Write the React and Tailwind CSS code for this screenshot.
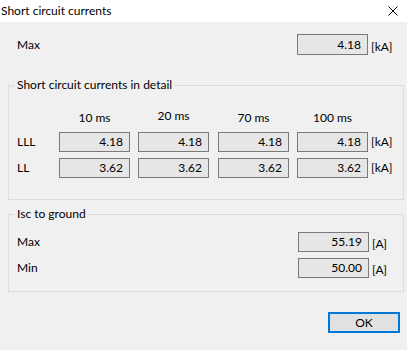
import React from "react";

const font = { fontFamily: 'Lato, "Noto Sans", sans-serif' };

const ValueBox = ({ value, className = "" }) => (
  <div
    className={`w-[71px] h-[20px] shrink-0 border border-[#7a7a7a] bg-[#e6e6e6] flex items-center justify-end pr-[6px] text-[12px] leading-none ${className}`}
  >
    {value}
  </div>
);

const Unit = ({ text }) => (
  <span className="pl-[3px] text-[12px] leading-none">{text}</span>
);

const Group = ({ title, className = "", children }) => (
  <div className={`ml-[8px] w-[396px] border border-[#dcdcdc] ${className}`}>
    <div className="-mt-[9px] h-[16px] flex">
      <span className="ml-[6px] px-[2px] bg-[#f0f0f0] text-[12px] leading-[16px]">{title}</span>
    </div>
    {children}
  </div>
);

const headers = ["10 ms", "20 ms", "70 ms", "100 ms"];

const rows = [
  { label: "LLL", values: ["4.18", "4.18", "4.18", "4.18"] },
  { label: "LL", values: ["3.62", "3.62", "3.62", "3.62"] },
];

const colGap = ["", "ml-[8px]", "ml-[9px]", "ml-[8px]"];

export default function App() {
  return (
    <div className="w-[407px] h-[350px] bg-[#f0f0f0] text-black overflow-hidden" style={font}>
      {/* title bar */}
      <div className="h-[22px] bg-white flex items-center justify-between">
        <span className="pl-[1px] text-[12px] leading-none">Short circuit currents</span>
        <svg className="mr-[9px]" width="10" height="10" viewBox="0 0 10 10">
          <path d="M0.5 0.5 L9.5 9.5 M9.5 0.5 L0.5 9.5" stroke="#000" strokeWidth="1" />
        </svg>
      </div>

      {/* max */}
      <div className="mt-[12px] h-[21px] flex items-center pl-[17px]">
        <span className="flex-1 text-[12px] leading-none">Max</span>
        <ValueBox value="4.18" className="h-[21px]" />
        <div className="w-[39px]">
          <Unit text="[kA]" />
        </div>
      </div>

      {/* detail group */}
      <Group title="Short circuit currents in detail" className="mt-[30px] h-[115px]">
        <div className="flex pl-[50px] mt-[17px] h-[16px]">
          {headers.map((h, i) => (
            <div
              key={h}
              className={`w-[71px] text-center text-[12px] leading-[16px] ${colGap[i]} ${i === 1 ? "-mt-[2px]" : ""}`}
            >
              {h}
            </div>
          ))}
        </div>
        <div className="flex flex-col gap-[6px] mt-[6px]">
          {rows.map((r) => (
            <div key={r.label} className="flex items-center pl-[8px] h-[20px]">
              <span className="w-[42px] text-[12px] leading-none">{r.label}</span>
              {r.values.map((v, i) => (
                <ValueBox key={i} value={v} className={colGap[i]} />
              ))}
              <Unit text="[kA]" />
            </div>
          ))}
        </div>
      </Group>

      {/* ground group */}
      <Group title="Isc to ground" className="mt-[14px] h-[78px]">
        <div className="flex flex-col gap-[6px] mt-[10px]">
          {[
            ["Max", "55.19"],
            ["Min", "50.00"],
          ].map(([label, v]) => (
            <div key={label} className="flex items-center pl-[8px] h-[20px]">
              <span className="flex-1 text-[12px] leading-none">{label}</span>
              <ValueBox value={v} />
              <div className="w-[34px]">
                <Unit text="[A]" />
              </div>
            </div>
          ))}
        </div>
      </Group>

      {/* footer */}
      <div className="flex justify-end pr-[7px] mt-[20px]">
        <button className="w-[72px] h-[21px] border-2 border-[#0078d7] bg-[#e1e1e1] text-[12px] leading-none flex items-center justify-center">
          OK
        </button>
      </div>
    </div>
  );
}
